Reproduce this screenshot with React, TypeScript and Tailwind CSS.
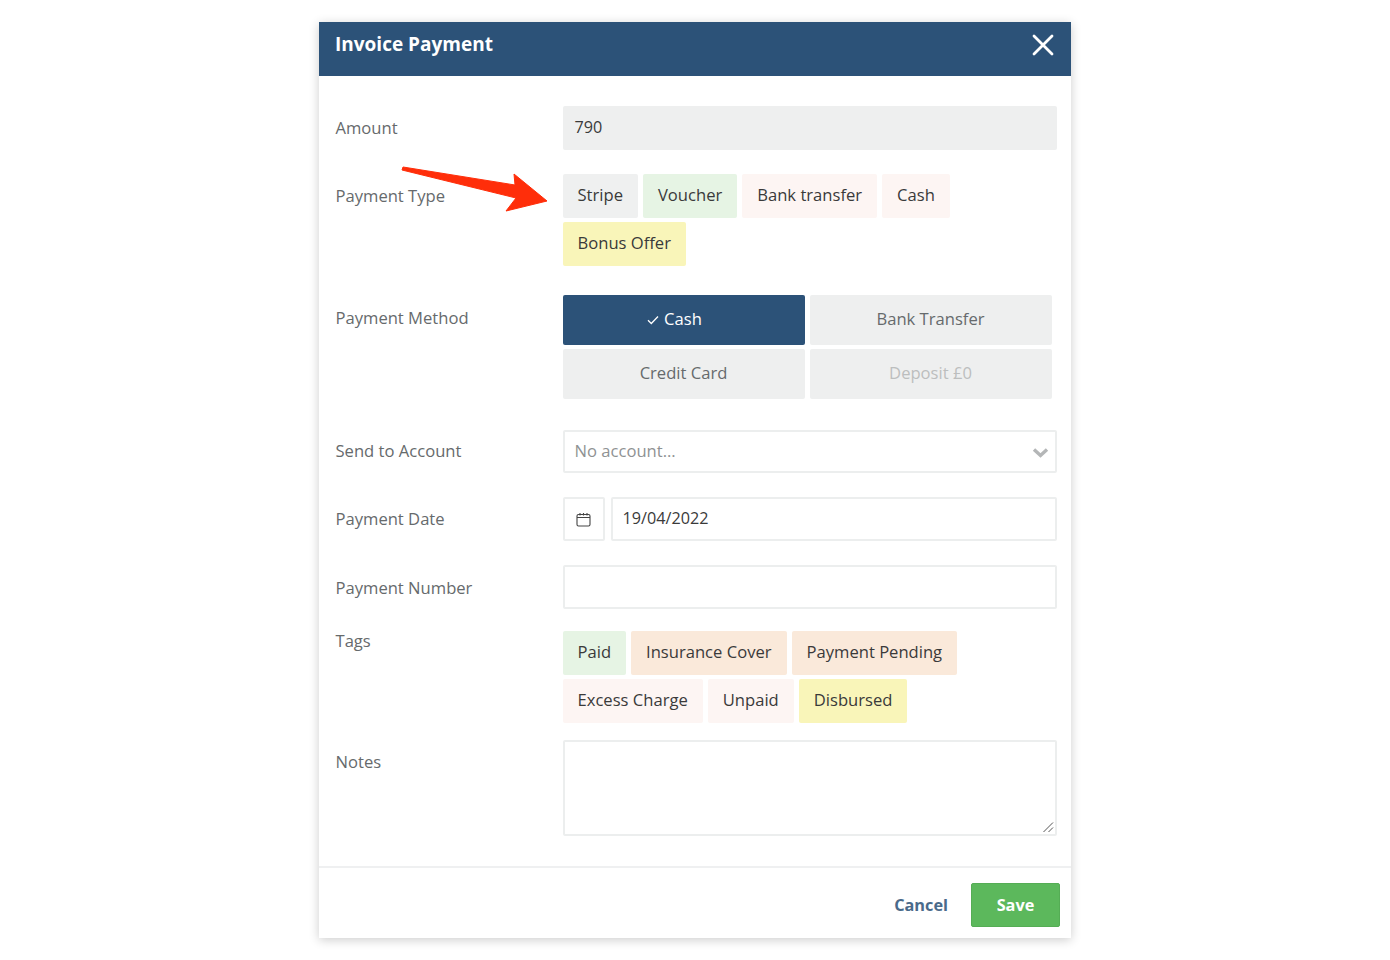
const tagStyle = 'h-[44px] px-[15px] pb-[2px] flex items-center rounded-[2px] text-[16.6px] text-[#3a3a3a]';
const inputStyle = 'border-2 border-[#eceeee] rounded-[2px] bg-white';
const choiceStyle = 'h-[50px] pb-[2px] rounded-[2px] flex items-center justify-center text-[16.6px]';

const paymentTypes = [
  { label: 'Stripe', color: 'bg-[#eff0f0]' },
  { label: 'Voucher', color: 'bg-[#e6f4e4]' },
  { label: 'Bank transfer', color: 'bg-[#fdf5f3]' },
  { label: 'Cash', color: 'bg-[#fdf5f3]' },
  { label: 'Bonus Offer', color: 'bg-[#f9f5b9]' },
];

const tags = [
  { label: 'Paid', color: 'bg-[#e6f4e4]' },
  { label: 'Insurance Cover', color: 'bg-[#fae9da]' },
  { label: 'Payment Pending', color: 'bg-[#fae9da]' },
  { label: 'Excess Charge', color: 'bg-[#fdf5f3]' },
  { label: 'Unpaid', color: 'bg-[#fdf5f3]' },
  { label: 'Disbursed', color: 'bg-[#f9f5b9]' },
];

function Label({ children, className = '' }: { children: string; className?: string }) {
  return <div className={`w-[227px] shrink-0 text-[16.6px] leading-[22px] text-[#666a6c] ${className}`}>{children}</div>;
}

function TagList({ items }: { items: { label: string; color: string }[] }) {
  return (
    <div className="flex flex-wrap gap-x-[5px] gap-y-[4px] w-[494px]">
      {items.map((t) => (
        <div key={t.label} className={`${tagStyle} ${t.color}`}>{t.label}</div>
      ))}
    </div>
  );
}

export default function App() {
  return (
    <div className="relative min-h-[960px] bg-white pt-[22px] font-['Open_Sans',sans-serif]">
      <div className="w-[752px] h-[916px] ml-[319px] bg-white shadow-[0_2px_10px_rgba(0,0,0,0.2)] flex flex-col">
        <div className="h-[54px] bg-[#2c5278] flex justify-between pl-[16px] pr-[17px] pt-[9px] shrink-0">
          <span className="text-[19px] leading-[26px] font-bold text-white">Invoice Payment</span>
          <svg width="22" height="22" viewBox="0 0 22 22" className="mt-[3px]">
            <path d="M2 2 L20 20 M20 2 L2 20" stroke="#fff" strokeWidth="2.8" strokeLinecap="round" />
          </svg>
        </div>

        <div className="flex-1 pl-[16.5px] pt-[30px]">
          <div className="flex items-center h-[44px]">
            <Label>Amount</Label>
            <div className="w-[494px] h-[44px] pb-[2px] bg-[#eeefef] rounded-[2px] pl-[12px] flex items-center text-[16.2px] text-[#3a3a3a]">790</div>
          </div>

          <div className="flex mt-[24px] h-[92px]">
            <Label className="pt-[11px]">Payment Type</Label>
            <TagList items={paymentTypes} />
          </div>

          <div className="flex mt-[29px]">
            <Label className="pt-[12px]">Payment Method</Label>
            <div className="grid grid-cols-[242px_242px] gap-x-[5px] gap-y-[4px]">
              <div className={`${choiceStyle} bg-[#2c5278] text-white gap-[5px] pr-[18px]`}>
                <svg width="12" height="10" viewBox="0 0 12 10" className="mt-[1px]">
                  <path d="M1 5.2 L4.3 8.5 L11 1.5" fill="none" stroke="#fff" strokeWidth="1.3" />
                </svg>
                Cash
              </div>
              <div className={`${choiceStyle} bg-[#eeefef] text-[#666a6c]`}>Bank Transfer</div>
              <div className={`${choiceStyle} bg-[#eeefef] text-[#666a6c]`}>Credit Card</div>
              <div className={`${choiceStyle} bg-[#eeefef] text-[#bcbebe]`}>Deposit £0</div>
            </div>
          </div>

          <div className="flex items-center mt-[31px]">
            <Label className="pb-[2px]">Send to Account</Label>
            <div className={`${inputStyle} w-[494px] h-[43px] pl-[10px] pr-[6px] flex items-center justify-between text-[16.6px] text-[#8f9293]`}>
              No account...
              <svg width="17" height="11" viewBox="0 0 17 11" className="mt-[1px]">
                <path d="M2 2.5 L8.5 8.5 L15 2.5" fill="none" stroke="#b4b6b7" strokeWidth="3.4" />
              </svg>
            </div>
          </div>

          <div className="flex items-center mt-[24px]">
            <Label>Payment Date</Label>
            <div className={`${inputStyle} w-[42px] h-[44px] flex items-center justify-center`}>
              <svg width="15" height="15" viewBox="0 0 15 15" fill="none" stroke="#444" strokeWidth="1.1">
                <rect x="1" y="2.5" width="13" height="11.5" rx="1.5" />
                <path d="M1 5.5 H14 M4 1 V3.5 M7.5 1 V3.5 M11 1 V3.5" />
              </svg>
            </div>
            <div className={`${inputStyle} w-[446px] h-[44px] ml-[6px] pl-[10px] pb-[2px] flex items-center text-[16.2px] text-[#3a3a3a]`}>19/04/2022</div>
          </div>

          <div className="flex items-center mt-[24px]">
            <Label className="pt-[2px]">Payment Number</Label>
            <div className={`${inputStyle} w-[494px] h-[44px]`} />
          </div>

          <div className="flex mt-[22px]">
            <Label className="-mt-[1px]">Tags</Label>
            <TagList items={tags} />
          </div>

          <div className="flex mt-[17px]">
            <Label className="pt-[11px]">Notes</Label>
            <div className={`${inputStyle} relative w-[494px] h-[96px]`}>
              <svg width="12" height="12" viewBox="0 0 12 12" className="absolute right-[1px] bottom-[1px]">
                <path d="M1.5 11 L11 1.5 M6.5 11 L11 6.5" stroke="#555" strokeWidth="1" />
              </svg>
            </div>
          </div>
        </div>

        <div className="h-[72px] shrink-0 border-t-2 border-[#eff0f1] flex items-start justify-end pr-[11px] pt-[15px]">
          <span className="h-[44px] flex items-center text-[16.3px] font-bold text-[#4a6a8a] mr-[23px]">Cancel</span>
          <div className="w-[89px] h-[44px] bg-[#5cb85c] border border-[#55ad55] rounded-[2px] flex items-center justify-center text-[16.3px] font-bold text-white">Save</div>
        </div>
      </div>

      <svg width="160" height="60" viewBox="0 0 160 60" className="absolute left-[395px] top-[160px]">
        <path d="M8 7 L120 25 L119 14 L152 41 L111 51 L121 38 L7 10 Z" fill="#ff2e0a" stroke="#ff2e0a" strokeWidth="1" strokeLinejoin="round" />
      </svg>
    </div>
  );
}
